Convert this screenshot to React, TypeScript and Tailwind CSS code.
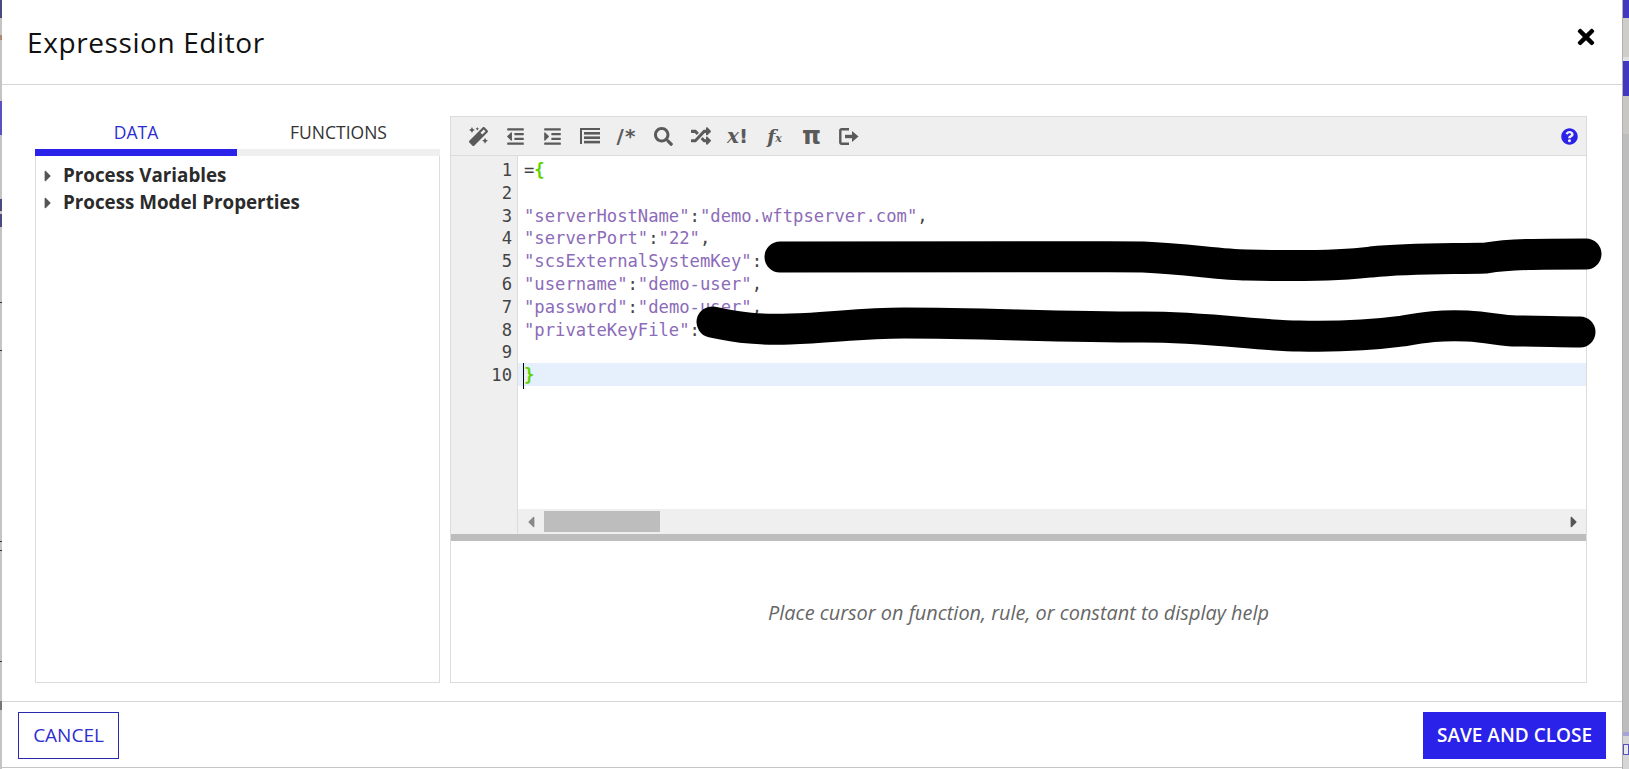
import React from "react";
import { FaMagic, FaOutdent, FaIndent, FaSearch, FaRandom, FaTimes, FaQuestionCircle, FaCaretRight, FaCaretLeft } from "react-icons/fa";

const P = "text-[#8c6bb8]";
const lines: React.ReactNode[] = [
  <><span className="text-[#444]">=</span><span className="text-[#5ed400] font-bold">{"{"}</span></>,
  "",
  <><span className={P}>"serverHostName"</span><span className="text-[#444]">:</span><span className={P}>"demo.wftpserver.com"</span><span className="text-[#444]">,</span></>,
  <><span className={P}>"serverPort"</span><span className="text-[#444]">:</span><span className={P}>"22"</span><span className="text-[#444]">,</span></>,
  <><span className={P}>"scsExternalSystemKey"</span><span className="text-[#444]">:</span></>,
  <><span className={P}>"username"</span><span className="text-[#444]">:</span><span className={P}>"demo-user"</span><span className="text-[#444]">,</span></>,
  <><span className={P}>"password"</span><span className="text-[#444]">:</span><span className={P}>"demo-user"</span><span className="text-[#444]">,</span></>,
  <><span className={P}>"privateKeyFile"</span><span className="text-[#444]">:</span></>,
  "",
  <span className="text-[#5ed400] font-bold">{"}"}</span>,
];

function ToolText({ children, cls }: { children: React.ReactNode; cls: string }) {
  return <span className={`flex w-[37px] items-center justify-center text-[#5a5a5a] ${cls}`}>{children}</span>;
}

function ToolIcon({ children }: { children: React.ReactNode }) {
  return <span className="flex w-[37px] justify-center text-[#5a5a5a]">{children}</span>;
}

export default function App() {
  return (
    <div className="relative flex h-[769px] w-[1629px] overflow-hidden bg-white font-['Open_Sans',sans-serif]">
      <div className="flex w-[2px] flex-col bg-[#c4c4c4]">
        <div className="h-[18px] bg-[#4a4a80]" />
        <div className="h-[17px]" />
        <div className="h-[5px] bg-[#b08a70]" />
        <div className="h-[61px]" />
        <div className="h-[34px] bg-[#5a50c0]" />
        <div className="h-[64px]" />
        <div className="h-[12px] bg-[#4a4a80]" />
        <div className="h-[3px]" />
        <div className="h-[13px] bg-[#4a4a80]" />
        <div className="h-[75px]" />
        <div className="h-px bg-[#333]" />
        <div className="h-[47px]" />
        <div className="h-px bg-[#333]" />
        <div className="h-[190px]" />
        <div className="h-px bg-[#333]" />
        <div className="h-[8px]" />
        <div className="h-px bg-[#333]" />
        <div className="h-[110px]" />
        <div className="h-px bg-[#333]" />
        <div className="h-[39px]" />
        <div className="h-[9px] bg-[#777]" />
      </div>

      <div className="flex h-[768px] flex-1 flex-col border-b border-[#c4c4c4]">
        <header className="flex h-[85px] shrink-0 items-center justify-between border-b border-[#d6d6d6] pl-[25px] pr-[24px]">
          <h1 className="text-[28px] font-medium leading-none tracking-[0.6px] text-[#111]">Expression Editor</h1>
          <button className="-mt-[10px] text-black"><FaTimes size={24} /></button>
        </header>

        <main className="flex min-h-0 flex-1 gap-[10px] pb-[18px] pl-[33px] pr-[35px] pt-[31px]">
          <section className="flex w-[405px] shrink-0 flex-col">
            <div className="flex h-[40px] shrink-0 bg-white">
              <div className="flex w-[202px] flex-col">
                <span className="flex h-[33px] items-center justify-center text-[17.5px] font-medium text-[#2d2dd0]">DATA</span>
                <span className="h-[7px] bg-[#2a22e8]" />
              </div>
              <div className="flex flex-1 flex-col">
                <span className="flex h-[33px] items-center justify-center text-[17.5px] text-[#333]">FUNCTIONS</span>
                <span className="h-[7px] bg-[#efefef]" />
              </div>
            </div>
            <div className="flex-1 border border-t-0 border-[#dcdcdc] pl-[3px] pt-[6px] text-[18.8px] font-bold leading-[27px] text-[#2b2b2b]">
              <div className="flex items-center gap-[6px]"><FaCaretRight size={18} className="text-[#555]" />Process Variables</div>
              <div className="flex items-center gap-[6px]"><FaCaretRight size={18} className="text-[#555]" />Process Model Properties</div>
            </div>
          </section>

          <section className="flex min-w-0 flex-1 flex-col border border-[#dcdcdc]">
            <div className="flex h-[39px] shrink-0 items-center justify-between border-b border-[#dcdcdc] bg-[#efefef] pl-[9px] pr-[8px]">
              <div className="flex items-center">
                <ToolIcon><FaMagic size={19} /></ToolIcon>
                <ToolIcon><FaOutdent size={19} /></ToolIcon>
                <ToolIcon><FaIndent size={19} /></ToolIcon>
                <ToolIcon>
                  <svg width="20" height="16" viewBox="0 0 20 16" fill="currentColor"><rect x="0" y="0" width="20" height="2" /><rect x="0" y="2" width="2" height="14" /><rect x="4" y="4" width="16" height="2.6" /><rect x="4" y="8.4" width="16" height="2.6" /><rect x="4" y="12.8" width="16" height="2.6" /></svg>
                </ToolIcon>
                <ToolText cls="font-['DejaVu_Sans',sans-serif] text-[20px] leading-none font-bold tracking-[1px]">/*</ToolText>
                <ToolIcon><FaSearch size={19} /></ToolIcon>
                <ToolIcon><FaRandom size={20} /></ToolIcon>
                <ToolText cls="text-[20px] leading-none font-bold">
                  <span className="font-['DejaVu_Serif',serif] italic">x</span>
                  <span className="font-['DejaVu_Sans',sans-serif]">!</span>
                </ToolText>
                <ToolText cls="font-['DejaVu_Serif',serif] italic font-bold text-[19px] leading-none">f<span className="mt-[5px] text-[11px]">x</span></ToolText>
                <ToolText cls="font-['DejaVu_Sans',sans-serif] font-bold text-[24px] leading-none">π</ToolText>
                <ToolIcon>
                  <svg width="20" height="17" viewBox="0 0 20 17" fill="none" stroke="currentColor" strokeWidth="2.4"><path d="M10 1.2H2.5a1.2 1.2 0 0 0-1.2 1.2v12.2a1.2 1.2 0 0 0 1.2 1.2H10" /><path d="M6 8.5H14" strokeWidth="3.4" /><path d="M13 3l6.5 5.5-6.5 5.5z" fill="currentColor" stroke="none" /></svg>
                </ToolIcon>
              </div>
              <FaQuestionCircle size={17} className="text-[#2a22e8]" />
            </div>

            <div className="flex min-h-0 flex-1">
              <div className="w-[67px] shrink-0 border-r border-[#dcdcdc] bg-[#efefef] pr-[5px] pt-[2px] text-right font-['DejaVu_Sans_Mono',monospace] text-[17.2px] leading-[25px] text-[#444]">
                {lines.map((_, i) => <div key={i} className="h-[22.8px]">{i + 1}</div>)}
              </div>
              <div className="flex min-w-0 flex-1 flex-col">
                <div className="relative flex-1 pt-[2px] font-['DejaVu_Sans_Mono',monospace] text-[17.2px] leading-[25px]">
                  {lines.map((l, i) => (
                    <div key={i} className={`h-[22.8px] whitespace-pre pl-[6px] ${i === 9 ? "bg-[#e6f0fc]" : ""}`}>
                      {i === 9 && <span className="absolute ml-[-1px] mt-0 h-[26px] w-px bg-black" />}
                      {l}
                    </div>
                  ))}
                </div>
                <div className="flex h-[25px] shrink-0 items-center bg-[#efefef] pl-[4px] pr-[3px]">
                  <FaCaretLeft size={18} className="text-[#888]" />
                  <span className="ml-[4px] h-[21px] w-[116px] bg-[#bdbdbd]" />
                  <span className="flex-1" />
                  <FaCaretRight size={18} className="text-[#555]" />
                </div>
              </div>
            </div>

            <div className="h-[7px] shrink-0 bg-[#bdbdbd]" />
            <div className="flex h-[141px] shrink-0 items-center justify-center pt-[2px] text-[19.9px] italic text-[#666]">
              Place cursor on function, rule, or constant to display help
            </div>
          </section>
        </main>

        <footer className="flex h-[66px] shrink-0 items-start justify-between border-t border-[#d6d6d6] pl-[16px] pr-[16px] pt-[10px]">
          <button className="flex h-[47px] w-[101px] items-center justify-center border border-[#2a2ab0] text-[19px] font-medium text-[#2d2dd0]">CANCEL</button>
          <button className="flex h-[47px] w-[183px] items-center justify-center bg-[#2a22e8] text-[19px] font-semibold text-white">SAVE AND CLOSE</button>
        </footer>
      </div>

      <div className="flex w-[7px] flex-col border-l border-[#b0b0b0] bg-[#bdbdbd]">
        <div className="h-[18px] bg-[#4038c0]" />
        <div className="h-[39px] bg-[#cfcdca]" />
        <div className="h-[4px] bg-[#e0e0e0]" />
        <div className="h-[35px] bg-[#4038c0]" />
        <div className="h-[38px] bg-[#c9c7c4]" />
        <div className="h-[598px]" />
        <div className="h-[4px] bg-[#a8a4d8]" />
        <div className="h-[8px] bg-[#d6d6d6]" />
        <div className="h-[11px] border border-[#5a50c0] bg-[#e8e8e8]" />
        <div className="flex-1 bg-[#d6d6d6]" />
      </div>

      <svg className="pointer-events-none absolute left-0 top-0" width="1629" height="769" fill="none" stroke="#000" strokeWidth="31" strokeLinecap="round" strokeLinejoin="round">
        <path d="M780 257C850 256 1000 256 1143 257C1190 259 1220 265 1247 265C1290 266 1340 266 1371 262C1410 258 1450 259 1486 258C1510 254 1540 254 1586 254" />
        <path d="M712 322C740 328 760 330 790 329C830 328 860 323 904 323C980 323 1060 327 1143 327C1210 327 1260 336 1299 336C1340 337 1380 334 1403 331C1425 327 1440 325 1467 326C1490 327 1500 331 1517 331C1540 331 1560 332 1580 332" />
      </svg>
    </div>
  );
}
